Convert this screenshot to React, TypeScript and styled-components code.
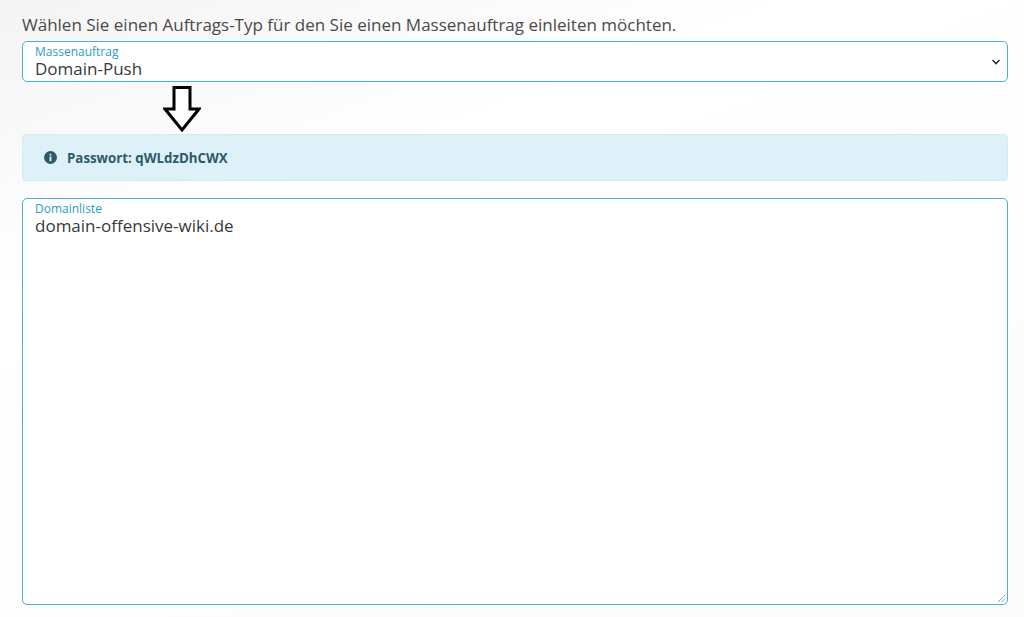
import React from 'react';
import styled, { createGlobalStyle } from 'styled-components';

const Global = createGlobalStyle`
  body {
    margin: 0;
    background: linear-gradient(160deg, #f4f4f5 0%, #ffffff 30%, #fbfbfc 100%);
    font-family: "Open Sans", "Noto Sans", sans-serif;
    color: #444;
  }
`;

const Page = styled.div`
  width: 1024px;
  height: 617px;
  padding: 14px 16px 0 22px;
  box-sizing: border-box;
  display: flex;
  flex-direction: column;
`;

const Intro = styled.p`
  margin: 0 0 5px;
  font-size: 17px;
  line-height: 22px;
  color: #4a4a4a;
`;

const Field = styled.div<{ $h: number }>`
  position: relative;
  width: 986px;
  height: ${p => p.$h}px;
  box-sizing: border-box;
  border: 1px solid #4bb0cf;
  border-radius: 5px;
  background: #fff;
  padding: 3px 12px;
`;

const Label = styled.div`
  font-size: 12px;
  line-height: 13px;
  color: #2b9cc4;
`;

const Value = styled.div`
  font-size: 17px;
  line-height: 21px;
  color: #3a3a3a;
`;

const Chevron = styled.svg`
  position: absolute;
  right: 6px;
  top: 16px;
`;

const ArrowRow = styled.div`
  height: 52px;
  padding-left: 141px;
  display: flex;
  align-items: flex-start;
  padding-top: 4px;
  box-sizing: border-box;
`;

const Alert = styled.div`
  width: 986px;
  height: 47px;
  box-sizing: border-box;
  background: #dff1f8;
  border: 1px solid #d3eaf3;
  border-radius: 4px;
  display: flex;
  align-items: center;
  gap: 10px;
  padding-left: 21px;
  font-size: 13.3px;
  font-weight: 700;
  color: #2e5a6a;
  margin-bottom: 17px;
`;

const Grip = styled.svg`
  position: absolute;
  right: 1px;
  bottom: 1px;
`;

export default function App() {
  return (
    <>
      <Global />
      <Page>
        <Intro>Wählen Sie einen Auftrags-Typ für den Sie einen Massenauftrag einleiten möchten.</Intro>
        <Field $h={41}>
          <Label>Massenauftrag</Label>
          <Value>Domain-Push</Value>
          <Chevron width="10" height="8" viewBox="0 0 10 8">
            <path d="M1.5 2 L5 5.5 L8.5 2" fill="none" stroke="#333" strokeWidth="1.6" />
          </Chevron>
        </Field>
        <ArrowRow>
          <svg width="38" height="46" viewBox="0 0 38 46">
            <path d="M11 1.5 H27 V23 H36 L19 44 L2 23 H11 Z" fill="#fff" stroke="#000" strokeWidth="3" strokeLinejoin="miter" />
          </svg>
        </ArrowRow>
        <Alert>
          <svg width="13" height="13" viewBox="0 0 14 14">
            <circle cx="7" cy="7" r="7" fill="#2e5a6a" />
            <rect x="6" y="6" width="2" height="5" fill="#dff1f8" />
            <circle cx="7" cy="4" r="1.1" fill="#dff1f8" />
          </svg>
          Passwort: qWLdzDhCWX
        </Alert>
        <Field $h={407}>
          <Label>Domainliste</Label>
          <Value>domain-offensive-wiki.de</Value>
          <Grip width="10" height="10" viewBox="0 0 10 10">
            <path d="M9 2 L2 9 M9 5.5 L5.5 9" stroke="#999" strokeWidth="1" />
          </Grip>
        </Field>
      </Page>
    </>
  );
}
